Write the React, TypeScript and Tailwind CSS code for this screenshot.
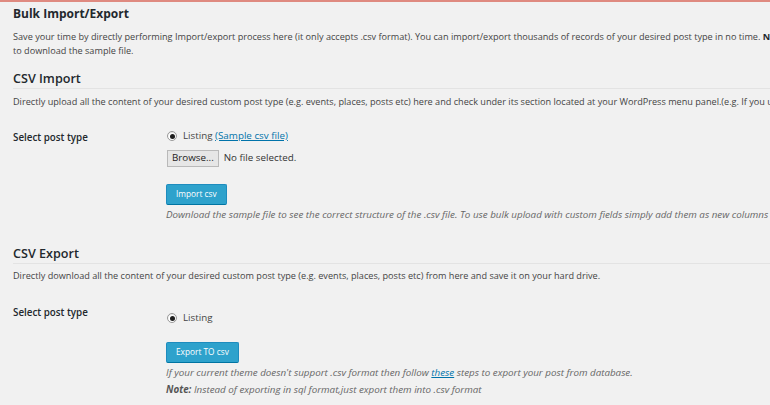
export default function App() {
  const font = { fontFamily: '"Open Sans", "Liberation Sans", sans-serif' }

  return (
    <div
      style={font}
      className="w-[770px] h-[405px] overflow-hidden bg-[#f1f1f1] border-t-2 border-[#df8a80] text-[#444] text-[9.15px]"
    >
      <div className="w-[900px] pl-[13px]">
        <h1 className="mt-[3px] leading-[18px] text-[12px] font-bold text-[#23282d]">Bulk Import/Export</h1>
        <p className="mt-[7px] leading-[14px]">
          <span className="block whitespace-nowrap">
            Save your time by directly performing Import/export process here (it only accepts .csv format). You can
            import/export thousands of records of your desired post type in no time.{" "}
            <b className="text-[#23282d]">Note:</b> Click on the Sample csv file link
          </span>
          <span className="block whitespace-nowrap">to download the sample file.</span>
        </p>

        <h3 className="mt-[12px] leading-[18px] text-[12.6px] font-semibold text-[#23282d] border-b border-[#e3e3e3]">
          CSV Import
        </h3>
        <p className="mt-[6px] leading-[14px] whitespace-nowrap">
          Directly upload all the content of your desired custom post type (e.g. events, places, posts etc) here and
          check under its section located at your WordPress menu panel.(e.g. If you upload listings then check under
          Listings menu)
        </p>

        <div className="mt-[20px] flex text-[9.8px]">
          <div className="w-[154px] pt-[2px] leading-[14px] font-semibold text-[#23282d]">Select post type</div>
          <div className="flex-1">
            <label className="flex items-center gap-[6px] leading-[14px]">
              <Radio />
              <span>
                Listing{" "}
                <a className="text-[#0073aa] underline">(Sample csv file)</a>
              </span>
            </label>
            <div className="mt-[7px] flex items-center gap-[5px]">
              <span className="h-[17px] px-[4px] flex items-center bg-[#e6e6e6] border border-[#b9b9b9] text-[#222]">
                Browse...
              </span>
              <span className="text-[#333]">No file selected.</span>
            </div>
            <button className="mt-[17px] -ml-[1px] h-[21px] px-[9px] bg-[#2ea2cc] border border-[#1e8cbe] border-b-[#0074a2] rounded-[2px] text-white text-[8.3px]">
              Import csv
            </button>
            <p className="mt-[3px] -ml-[1px] leading-[14px] italic text-[#666] whitespace-nowrap">
              Download the sample file to see the correct structure of the .csv file. To use bulk upload with custom
              fields simply add them as new columns in the file.
            </p>
          </div>
        </div>

        <h3 className="mt-[23px] leading-[18px] text-[12.6px] font-semibold text-[#23282d] border-b border-[#e3e3e3]">
          CSV Export
        </h3>
        <p className="mt-[5px] leading-[14px] whitespace-nowrap">
          Directly download all the content of your desired custom post type (e.g. events, places, posts etc) from here
          and save it on your hard drive.
        </p>

        <div className="mt-[23px] flex text-[9.8px]">
          <div className="w-[154px] leading-[14px] font-semibold text-[#23282d]">Select post type</div>
          <div className="flex-1 pt-[5px]">
            <label className="flex items-center gap-[6px] leading-[14px]">
              <Radio />
              <span>Listing</span>
            </label>
            <button className="mt-[17px] -ml-[1px] h-[21px] px-[9px] bg-[#2ea2cc] border border-[#1e8cbe] border-b-[#0074a2] rounded-[2px] text-white text-[8.3px]">
              Export TO csv
            </button>
            <p className="mt-[3px] -ml-[1px] leading-[14px] italic text-[#666] whitespace-nowrap">
              If your current theme doesn't support .csv format then follow{" "}
              <a className="text-[#0073aa] underline">these</a> steps to export your post from database.
            </p>
            <p className="mt-[3px] -ml-[1px] leading-[14px] italic text-[#666] whitespace-nowrap">
              <b className="text-[#555]">Note:</b> Instead of exporting in sql format,just export them into .csv format
            </p>
          </div>
        </div>
      </div>
    </div>
  )
}

function Radio() {
  return (
    <span className="w-[10px] h-[10px] rounded-full border border-[#999] bg-white flex items-center justify-center shadow-[inset_0_1px_1px_rgba(0,0,0,0.1)]">
      <span className="w-[5px] h-[5px] rounded-full bg-[#1e1e1e]" />
    </span>
  )
}
